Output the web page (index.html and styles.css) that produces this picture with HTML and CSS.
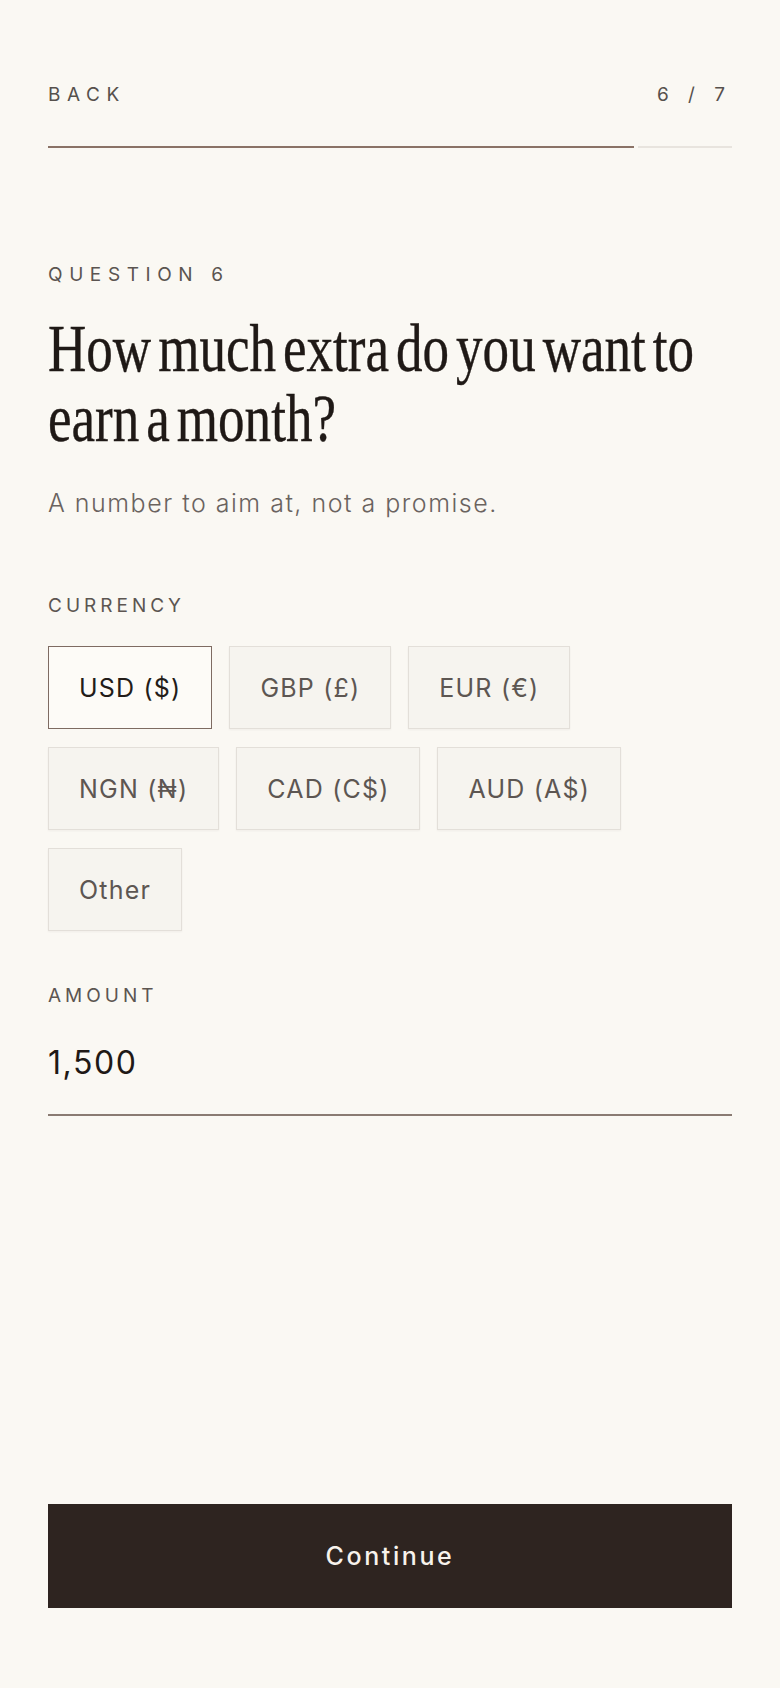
FILE: index.html
```html
<!DOCTYPE html>
<html lang="en">
<head>
<meta charset="utf-8">
<meta name="viewport" content="width=device-width, initial-scale=1">
<title>Question 6</title>
<link rel="stylesheet" href="styles.css">
</head>
<body>
<main class="page">
  <header class="topbar">
    <button class="back" type="button">BACK</button>
    <span class="step">6 / 7</span>
  </header>
  <div class="progress">
    <span class="progress-done"></span>
    <span class="progress-left"></span>
  </div>

  <p class="eyebrow">QUESTION 6</p>
  <h1 class="title">How much extra do you want to earn a month?</h1>
  <p class="subtitle">A number to aim at, not a promise.</p>

  <p class="label label-currency">CURRENCY</p>
  <div class="chips">
    <button class="chip chip-selected" type="button">USD ($)</button>
    <button class="chip" type="button">GBP (£)</button>
    <button class="chip" type="button">EUR (€)</button>
    <button class="chip" type="button">NGN (₦)</button>
    <button class="chip" type="button">CAD (C$)</button>
    <button class="chip" type="button">AUD (A$)</button>
    <button class="chip" type="button">Other</button>
  </div>

  <label class="label label-amount" for="amount">AMOUNT</label>
  <input class="amount" id="amount" type="text" value="1,500">

  <button class="continue" type="button">Continue</button>
</main>
</body>
</html>
```

FILE: styles.css
```css
html, body {
  margin: 0;
  padding: 0;
  background: #faf8f3;
  overflow-x: hidden;
}

body {
  font-family: "Inter", "Open Sans", "Liberation Sans", sans-serif;
  color: #231c19;
}

.page {
  box-sizing: border-box;
  min-height: 1688px;
  padding: 83px 48px 80px;
  display: flex;
  flex-direction: column;
}

.topbar {
  display: flex;
  justify-content: space-between;
  align-items: center;
  height: 24px;
}

.back,
.step {
  font-family: inherit;
  font-size: 19px;
  font-weight: 400;
  line-height: 24px;
  letter-spacing: 6.6px;
  color: #56504c;
}

.back {
  background: none;
  border: 0;
  padding: 0;
  cursor: pointer;
}

.step {
  letter-spacing: 7px;
}

.progress {
  display: flex;
  gap: 4px;
  height: 2px;
  margin-top: 39px;
}

.progress-done {
  flex: 586 0 0;
  background: #8a7266;
}

.progress-left {
  flex: 94 0 0;
  background: #e8e4de;
}

.eyebrow {
  margin: 115px 0 0;
  font-size: 19px;
  line-height: 24px;
  letter-spacing: 6.6px;
  color: #5a5450;
}

.title {
  margin: 26px 0 0;
  width: 880px;
  font-family: "Liberation Serif", "Times New Roman", serif;
  font-size: 68px;
  font-weight: 400;
  line-height: 70px;
  word-spacing: -8px;
  color: #1f1916;
  -webkit-text-stroke: 0.4px #1f1916;
  transform: scaleX(0.78);
  transform-origin: left top;
}

.subtitle {
  margin: 34px 0 0;
  font-size: 25px;
  font-weight: 300;
  line-height: 32px;
  letter-spacing: 1.5px;
  color: #6a635f;
}

.label {
  display: block;
  font-size: 19px;
  line-height: 24px;
  letter-spacing: 4px;
  color: #5c5551;
}

.label-currency {
  margin: 75px 0 0;
}

.chips {
  display: flex;
  flex-wrap: wrap;
  gap: 18px 17px;
  margin-top: 28px;
}

.chip {
  box-sizing: border-box;
  height: 83px;
  padding: 0 30px;
  font-family: inherit;
  font-size: 25px;
  font-weight: 400;
  letter-spacing: 1.2px;
  color: #5d5652;
  background: #f6f4ef;
  border: 1px solid #e3dfd9;
  box-shadow: 0 1px 2px rgba(60, 40, 30, 0.05);
  cursor: pointer;
}

.chip-selected {
  background: #fdfbf7;
  border-color: #7e6b62;
  color: #231c19;
  box-shadow: none;
}

.label-amount {
  margin-top: 53px;
}

.amount {
  display: block;
  box-sizing: border-box;
  width: 100%;
  height: 74px;
  margin: 34px 0 0;
  padding: 0 0 32px;
  border: 0;
  border-bottom: 2px solid #8a7b73;
  border-radius: 0;
  background: transparent;
  font-family: inherit;
  font-size: 32px;
  line-height: 40px;
  letter-spacing: 1.6px;
  color: #1f1916;
  outline: none;
}

.continue {
  margin-top: auto;
  height: 104px;
  width: 100%;
  border: 0;
  border-radius: 0;
  background: #2e2420;
  color: #f7f2ec;
  font-family: inherit;
  font-size: 25px;
  font-weight: 500;
  letter-spacing: 2.6px;
  cursor: pointer;
}
```
